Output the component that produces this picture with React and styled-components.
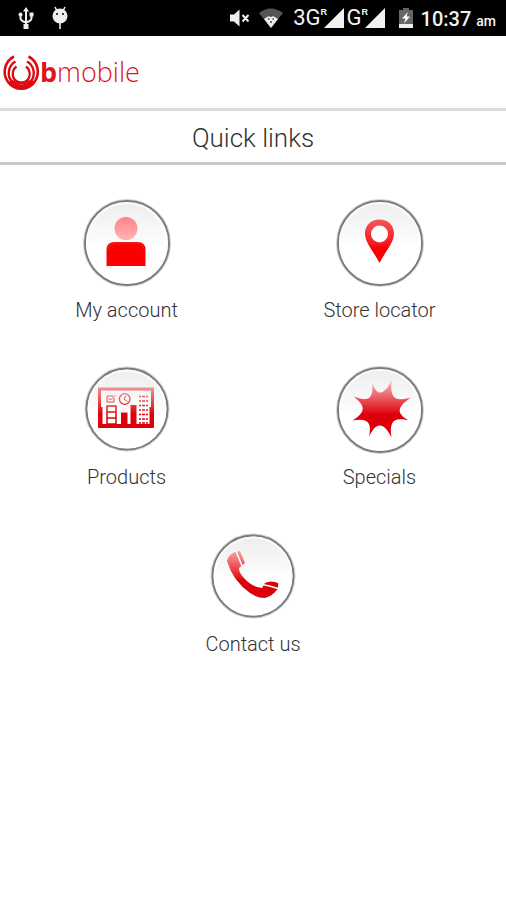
import React from "react";
import styled, { createGlobalStyle } from "styled-components";

const GlobalStyle = createGlobalStyle`
  body {
    margin: 0;
    background: #fff;
    color: #333;
    font-family: Roboto, "Liberation Sans", sans-serif;
  }
`;

const StatusBar = styled.header`
  display: flex;
  align-items: center;
  justify-content: space-between;
  height: 36px;
  padding: 0 10px 0 18px;
  background: #000;
  color: #f2f2f2;
`;

const StatusGroup = styled.div`
  display: flex;
  align-items: center;
  gap: ${({ $gap }) => $gap}px;
`;

const Signal = styled.div`
  display: flex;
  align-items: center;
  font-size: 22px;
  line-height: 32px;
`;

const Bars = styled.span`
  position: relative;
  display: flex;
  padding-left: 3px;
`;

const Roaming = styled.sup`
  position: absolute;
  top: -1px;
  left: 0;
  font: bold 9px/10px "Liberation Sans", sans-serif;
`;

const Networks = styled.div`
  display: flex;
  gap: 3px;
  margin: 0 6px 0 2px;
`;

const Clock = styled.time`
  padding-top: 3px;
  font-size: 20px;
  font-weight: 500;
  line-height: 24px;
  white-space: nowrap;
`;

const Meridiem = styled.span`
  font-size: 14px;
`;

const BrandBar = styled.div`
  display: flex;
  align-items: center;
  height: 72px;
  padding: 0 3px;
`;

const Wordmark = styled.span`
  color: #e0141c;
  font: 300 27px/32px "Open Sans", sans-serif;

  b {
    font-weight: 700;
  }
`;

const Title = styled.h1`
  margin: 0;
  padding: 12px 0 8px;
  border-top: 3px solid #dadada;
  border-bottom: 3px solid #c8c8c8;
  font-size: 26px;
  font-weight: 300;
  line-height: 31px;
  text-align: center;
`;

const Links = styled.nav`
  display: grid;
  grid-template-columns: 1fr 1fr;
  row-gap: 44px;
  padding: 34px 0;
`;

const Tile = styled.button`
  display: flex;
  flex-direction: column;
  align-items: center;
  gap: 11px;
  padding: 0;
  border: 0;
  background: none;
  color: inherit;
  font: 300 20px/24px Roboto, "Liberation Sans", sans-serif;
  cursor: pointer;
  grid-column: ${({ $wide }) => ($wide ? "1 / -1" : "auto")};
`;

const UsbIcon = () => (
  <svg width="16" height="24" viewBox="0 0 16 24" fill="#eee" stroke="#eee">
    <path d="M8 4v15M2.500 9v3q0 3 5.500 4.500M13.500 9v3q0 3-5.500 4.500" fill="none" strokeWidth="2" />
    <path d="M8 1l3 4.500H5z" stroke="none" />
    <path d="M5.500 18h5v5h-5z" stroke="none" />
    <circle cx="2.500" cy="8.500" r="2" stroke="none" />
    <path d="M11.500 6.500h4v4h-4z" stroke="none" />
  </svg>
);

const DroidIcon = () => (
  <svg width="16" height="24" viewBox="0 0 16 24">
    <path d="M3 1l2 4M13 1l-2 4M8 16v7" stroke="#eee" strokeWidth="1.600" />
    <circle cx="8" cy="10" r="7.500" fill="#eee" />
    <circle cx="5" cy="8" r="1" />
    <circle cx="11" cy="8" r="1" />
  </svg>
);

const MuteIcon = () => (
  <svg width="22" height="20" viewBox="0 0 22 20">
    <path d="M1 6.500h4l5.500-5v17L5 13.500H1z" fill="#eee" />
    <path d="M13.500 7l6 6.500M19.500 7l-6 6.500" stroke="#eee" strokeWidth="2" />
  </svg>
);

const WifiIcon = () => (
  <svg width="24" height="20" viewBox="0 0 24 20">
    <path d="M0 5Q12-4 24 5L12 20z" fill="#555" />
    <path d="M5 11Q12 5 19 11L12 20z" fill="#eee" />
    <path d="M12 6v3M9 11h1.500M13.500 11H15M12 13v2" stroke="#444" strokeWidth="1.500" />
  </svg>
);

const BatteryIcon = () => (
  <svg width="14" height="20" viewBox="0 0 14 20">
    <path d="M4 0h6v2h4v18H0V2h4z" fill="#666" />
    <path d="M0 16h14v4H0z" fill="#eee" />
    <path d="M9 4L3 10.500h3.500L5 15.500l6-7H7.500z" fill="#fff" />
  </svg>
);

const Strength = ({ label }) => (
  <Signal>
    {label}
    <Bars>
      <Roaming>R</Roaming>
      <svg width="20" height="20" viewBox="0 0 20 20">
        <path d="M20 0v20H0z" fill="#f2f2f2" />
      </svg>
    </Bars>
  </Signal>
);

const BrandMark = () => (
  <svg width="37" height="37" viewBox="0 0 37 37" fill="none" stroke="#dc0a12">
    <path d="M11 2.500A16.500 17 0 1 0 25.500 2.500" strokeWidth="2.600" />
    <path d="M12.500 7.500A12.500 13 0 1 0 24 7.500" strokeWidth="2.400" />
    <path d="M13.500 12.500A8.500 9 0 1 0 23 12.500" strokeWidth="2.200" />
    <path d="M7 27Q18.500 39 30 27" strokeWidth="5" />
    <path d="M11 26Q18.500 32 26 26" strokeWidth="3" />
  </svg>
);

const Badge = ({ cx = 44, cy = 44, r = 42, children }) => (
  <svg width="88" height="88" viewBox="0 0 88 88" aria-hidden="true">
    <defs>
      <linearGradient id="gloss" x1="0" y1="0" x2="0" y2="1">
        <stop offset="0" stopColor="#ededed" />
        <stop offset="0.450" stopColor="#fbfbfb" />
        <stop offset="0.550" stopColor="#fff" />
      </linearGradient>
      <linearGradient id="red" gradientUnits="userSpaceOnUse" x1="0" y1="18" x2="0" y2="56">
        <stop offset="0" stopColor="#f8a4a8" />
        <stop offset="0.600" stopColor="#e22b30" />
        <stop offset="0.800" stopColor="#dc000a" />
      </linearGradient>
      <linearGradient id="head" x1="0" y1="0" x2="0" y2="1">
        <stop offset="0" stopColor="#ff8585" />
        <stop offset="1" stopColor="#ffb4b4" />
      </linearGradient>
      <linearGradient id="pin" x1="0" y1="0" x2="0" y2="1">
        <stop offset="0" stopColor="#f4565a" />
        <stop offset="0.550" stopColor="#f51c20" />
        <stop offset="0.650" stopColor="#fb0000" />
      </linearGradient>
    </defs>
    <circle cx={cx} cy={cy} r={r} fill="#fff" stroke="#d4d4d4" strokeWidth="4" />
    <circle cx={cx} cy={cy} r={r} fill="url(#gloss)" stroke="#7c7c7c" strokeWidth="2" />
    <circle cx={cx} cy={cy} r={r - 2} fill="none" stroke="#fff" strokeOpacity="0.700" strokeWidth="2" />
    {children}
  </svg>
);

const AccountIcon = () => (
  <Badge>
    <circle cx="43" cy="29.500" r="11.500" fill="url(#head)" />
    <path d="M23.500 67V51q0-8 8-8h23q8 0 8 8v16z" fill="#fb0000" />
    <path d="M25 50q1-6 7-6h22q6 0 7 6" fill="none" stroke="#e23030" />
  </Badge>
);

const LocatorIcon = () => (
  <Badge>
    <path
      d="M43.500 20.500c-8.500 0-14.500 6-14.500 14 0 9 8 17 14.500 29.500C50 51.500 58 43.500 58 34.500c0-8-6-14-14.500-14z"
      fill="url(#pin)"
    />
    <circle cx="43.500" cy="35" r="8.500" fill="#fff" />
  </Badge>
);

const ProductsIcon = () => (
  <Badge cy={43} r={40.5}>
    <g fill="none" stroke="url(#red)">
      <path d="M16.500 23h53v37h-53z" strokeWidth="3" />
      <path d="M17.500 41v19h51V41" strokeWidth="4" />
      <path d="M24 40h9v18h-9zM24 46h9M24 52h9" strokeWidth="1.500" />
      <path d="M31 32v4h-7v-6h6M25.500 32l2 2 5-5" />
      <circle cx="41.700" cy="33" r="5.300" strokeWidth="1.300" />
      <path d="M43 29.500l-2 3.500 3.500 2.500" />
      <path
        d="M56 30.500h10M56 35h10M56 39.500h10M56 44h10M56 48.500h10M56 53h10M56 57h10"
        strokeWidth="1.500"
        strokeDasharray="2 1 3 1"
      />
    </g>
    <path d="M38 46.500h6.500V60H38zM47.500 39h6v21h-6z" fill="url(#red)" />
  </Badge>
);

const SpecialsIcon = () => (
  <Badge>
    <path
      d="M36.500 17.500C41 30 48 30 55.500 14.500C54 33 59 36 75 31.500C61 41 60 47 72.500 54.500C58 51 53 55 55.500 71.500C48 56 40 55 33 71C36 56 32 52 16.500 54.500C30 46 30 40 17.500 30.500C33 36 37 33 36.500 17.500z"
      fill="url(#red)"
    />
  </Badge>
);

const ContactIcon = () => (
  <Badge cy={43} r={40.5}>
    <path
      d="M18 28q1-6 8-9l5-1 5 12-6 5q0 5 5 10 6 7 13 9l5 1 3-5q6-3 13 0 1 6-2 8-4 5-11 7-8 0-15-5Q24 48 18 28z"
      fill="url(#red)"
    />
    <path d="M27 18l6 15M53 51.500q7 1 16 4" fill="none" stroke="#fff" strokeWidth="1.500" />
  </Badge>
);

const links = [
  { label: "My account", Icon: AccountIcon },
  { label: "Store locator", Icon: LocatorIcon },
  { label: "Products", Icon: ProductsIcon },
  { label: "Specials", Icon: SpecialsIcon },
  { label: "Contact us", Icon: ContactIcon, wide: true },
];

const App = () => (
  <>
    <GlobalStyle />
    <StatusBar>
      <StatusGroup $gap={18}>
        <UsbIcon />
        <DroidIcon />
      </StatusGroup>
      <StatusGroup $gap={8}>
        <MuteIcon />
        <WifiIcon />
        <Networks>
          <Strength label="3G" />
          <Strength label="G" />
        </Networks>
        <BatteryIcon />
        <Clock>
          10:37 <Meridiem>am</Meridiem>
        </Clock>
      </StatusGroup>
    </StatusBar>
    <BrandBar>
      <BrandMark />
      <Wordmark>
        <b>b</b>mobile
      </Wordmark>
    </BrandBar>
    <main>
      <Title>Quick links</Title>
      <Links>
        {links.map(({ label, Icon, wide }) => (
          <Tile key={label} type="button" $wide={wide}>
            <Icon />
            {label}
          </Tile>
        ))}
      </Links>
    </main>
  </>
);

export default App;
